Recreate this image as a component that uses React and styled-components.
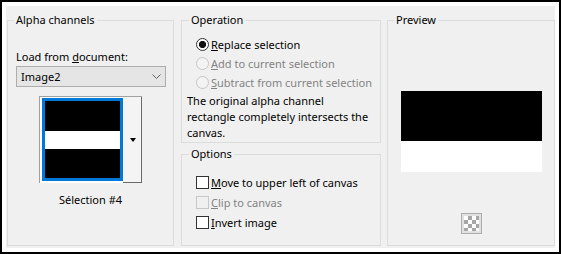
import styled, { createGlobalStyle } from 'styled-components';

const GlobalStyle = createGlobalStyle`
  html, body {
    margin: 0;
    padding: 0;
    background: #ffffff;
  }
  body {
    font-family: "Noto Sans", "Liberation Sans", sans-serif;
    font-size: 11px;
    color: #000000;
  }
`;

const Frame = styled.div`
  width: 561px;
  height: 254px;
  box-sizing: border-box;
  border: 2px solid #000000;
  padding: 4px;
  background: #ffffff;
`;

const Dialog = styled.div`
  height: 100%;
  box-sizing: border-box;
  background: #f0f0f0;
  display: flex;
  padding: 7px 0 2px 1px;
`;

const Column = styled.div`
  display: flex;
  flex-direction: column;
  gap: 4px;
  width: 200px;
  margin: 0 6px 0 7px;
`;

const Group = styled.fieldset`
  margin: 0;
  padding: 0;
  min-width: 0;
  box-sizing: border-box;
  width: ${p => (p.$width ? `${p.$width}px` : '100%')};
  height: ${p => p.$height}px;
  border: 1px solid #dcdcdc;
`;

const Legend = styled.legend`
  margin-left: ${p => p.$indent || 6}px;
  padding: 0 2px;
  line-height: 14px;
  font-size: 11px;
`;

const Body = styled.div`
  display: flex;
  flex-direction: column;
  align-items: ${p => p.$center ? 'center' : 'stretch'};
  padding: ${p => p.$pad || '0'};
`;

const Label = styled.div`
  line-height: 15px;
  margin-top: 22px;
  padding-left: 8px;
`;

const Combo = styled.div`
  margin: 2px 0 0 8px;
  width: 150px;
  height: 21px;
  box-sizing: border-box;
  border: 1px solid #adadad;
  background: #e5e5e5;
  display: flex;
  align-items: center;
  justify-content: space-between;
  padding: 0 4px 0 4px;
`;

const Thumb = styled.div`
  align-self: center;
  margin-top: 9px;
  display: flex;
  width: 103px;
  height: 87px;
  box-sizing: border-box;
  border-top: 1px solid #a0a0a0;
  border-left: 1px solid #a0a0a0;
  background: #ffffff;
`;

const Well = styled.div`
  padding: 1px 0 1px 2px;
`;

const Swatch = styled.div`
  width: 81px;
  height: 83px;
  box-sizing: border-box;
  border: 3px solid #0078d7;
  background: linear-gradient(
    #000000 0 30px,
    #ffffff 30px 48px,
    #000000 48px
  );
`;

const DropButton = styled.div`
  flex: 1;
  box-sizing: border-box;
  border-right: 1px solid #696969;
  border-bottom: 1px solid #696969;
  background: #f4f4f4;
  display: flex;
  align-items: center;
  justify-content: center;
  &::after {
    content: "";
    border-left: 3.5px solid transparent;
    border-right: 3.5px solid transparent;
    border-top: 4px solid #000000;
    margin-left: 1px;
  }
`;

const Caption = styled.div`
  text-align: center;
  line-height: 15px;
  margin-top: 9px;
`;

const Row = styled.div`
  display: flex;
  align-items: center;
  gap: 2px;
  height: ${p => p.$h}px;
  padding-left: 14px;
  color: ${p => (p.$disabled ? '#838383' : '#000000')};
  white-space: nowrap;
`;

const Radio = styled.span`
  flex: none;
  width: 13px;
  height: 13px;
  box-sizing: border-box;
  border-radius: 50%;
  border: 1px solid ${p => (p.$disabled ? '#c6c6c6' : '#333333')};
  background: ${p =>
    p.$checked
      ? 'radial-gradient(circle, #111111 0 3.3px, #ffffff 3.9px)'
      : p.$disabled ? '#f3f3f3' : '#ffffff'};
`;

const Check = styled.span`
  flex: none;
  width: 13px;
  height: 13px;
  box-sizing: border-box;
  border: 1px solid ${p => (p.$disabled ? '#c6c6c6' : '#333333')};
  background: ${p => (p.$disabled ? '#f0f0f0' : '#ffffff')};
`;

const Note = styled.div`
  margin-top: 1px;
  padding-left: 5px;
  line-height: 16px;
  white-space: nowrap;
`;

const Preview = styled.div`
  margin-top: 64px;
  width: 141px;
  height: 81px;
  background: linear-gradient(#000000 0 50px, #ffffff 50px);
`;

const CheckerButton = styled.div`
  margin-top: 41px;
  width: 21px;
  height: 21px;
  box-sizing: border-box;
  border: 1px solid #adadad;
  background: #e1e1e1;
  padding: 2px;
`;

const Checker = styled.div`
  width: 100%;
  height: 100%;
  background: repeating-conic-gradient(#a6a6a6 0 25%, #ffffff 0 50%) 0 0 / 8px 8px;
`;

function Chevron() {
  return (
    <svg width="9" height="5" viewBox="0 0 9 5">
      <polyline points="0.5,0.5 4.5,4.5 8.5,0.5" fill="none" stroke="#606060" strokeWidth="1" />
    </svg>
  );
}

export default function App() {
  return (
    <>
      <GlobalStyle />
      <Frame>
        <Dialog>
          <Group $width={167} $height={233}>
            <Legend>Alpha channels</Legend>
            <Body>
              <Label>Load from <u>d</u>ocument:</Label>
              <Combo>
                <span>Image2</span>
                <Chevron />
              </Combo>
              <Thumb>
                <Well><Swatch /></Well>
                <DropButton />
              </Thumb>
              <Caption>Sélection #4</Caption>
            </Body>
          </Group>

          <Column>
            <Group $height={130}>
              <Legend $indent={7}>Operation</Legend>
              <Body $pad="8px 0 0 0">
                <Row $h={19}><Radio $checked /><span><u>R</u>eplace selection</span></Row>
                <Row $h={19} $disabled><Radio $disabled /><span><u>A</u>dd to current selection</span></Row>
                <Row $h={19} $disabled><Radio $disabled /><span><u>S</u>ubtract from current selection</span></Row>
                <Note>
                  The original alpha channel<br />
                  rectangle completely intersects the<br />
                  canvas.
                </Note>
              </Body>
            </Group>
            <Group $height={99}>
              <Legend $indent={7}>Options</Legend>
              <Body $pad="11px 0 0 0">
                <Row $h={20}><Check /><span><u>M</u>ove to upper left of canvas</span></Row>
                <Row $h={20} $disabled><Check $disabled /><span><u>C</u>lip to canvas</span></Row>
                <Row $h={20}><Check /><span><u>I</u>nvert image</span></Row>
              </Body>
            </Group>
          </Column>

          <Group $width={168} $height={233}>
            <Legend>Preview</Legend>
            <Body $center>
              <Preview />
              <CheckerButton><Checker /></CheckerButton>
            </Body>
          </Group>
        </Dialog>
      </Frame>
    </>
  );
}
